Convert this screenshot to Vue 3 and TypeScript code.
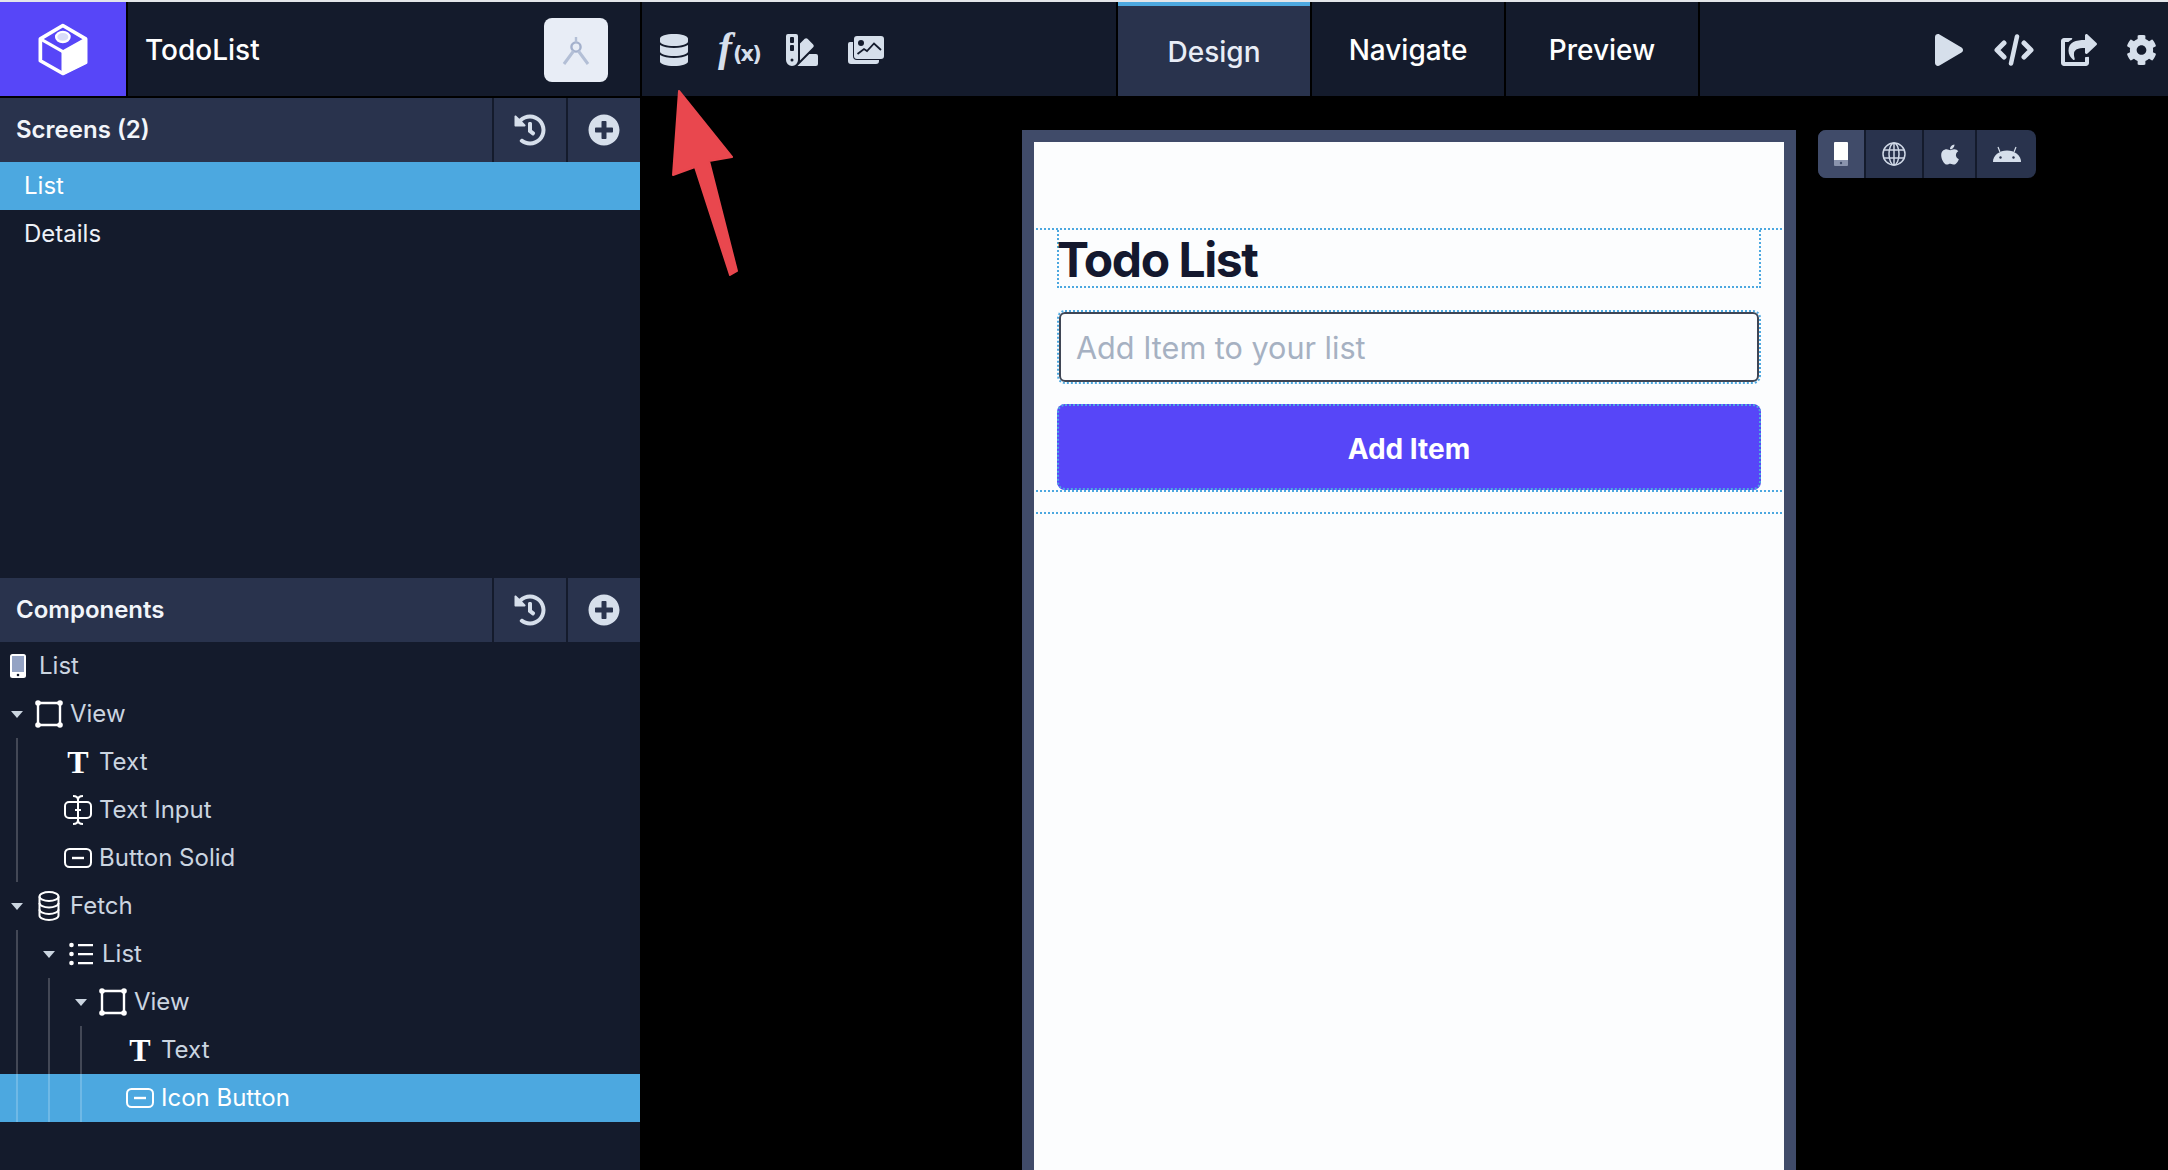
<script setup lang="ts">
interface TreeRow {
  label: string;
  icon: string;
  pad: number;
  open?: boolean;
  guides: number[];
  selected?: boolean;
}

const screens = [
  { name: "List", selected: true },
  { name: "Details", selected: false },
];

const tree: TreeRow[] = [
  { label: "List", icon: "phone", pad: 4, guides: [] },
  { label: "View", icon: "view", pad: 0, open: true, guides: [] },
  { label: "Text", icon: "text", pad: 64, guides: [16] },
  { label: "Text Input", icon: "input", pad: 64, guides: [16] },
  { label: "Button Solid", icon: "button", pad: 64, guides: [16] },
  { label: "Fetch", icon: "fetch", pad: 0, open: true, guides: [] },
  { label: "List", icon: "list", pad: 32, open: true, guides: [16] },
  { label: "View", icon: "view", pad: 64, open: true, guides: [16, 48] },
  { label: "Text", icon: "text", pad: 126, guides: [16, 48, 80] },
  { label: "Icon Button", icon: "button", pad: 126, guides: [16, 48, 80], selected: true },
];

const tabs = [
  { name: "Design", active: true },
  { name: "Navigate", active: false },
  { name: "Preview", active: false },
];

const historyPath =
  "M504 255.531c.253 136.64-111.18 248.372-247.82 248.468-59.015.042-113.223-20.53-155.822-54.911-11.077-8.94-11.905-25.541-1.839-35.607l11.267-11.267c8.609-8.609 22.353-9.551 31.891-1.984C173.062 425.135 212.781 440 256 440c101.705 0 184-82.311 184-184 0-101.705-82.311-184-184-184-48.814 0-93.149 18.969-126.068 49.932l50.754 50.754c10.08 10.08 2.941 27.314-11.313 27.314H24c-8.837 0-16-7.163-16-16V38.627c0-14.254 17.234-21.393 27.314-11.314l49.372 49.372C129.209 34.136 189.552 8 256 8c136.81 0 247.747 110.78 248 247.531zm-180.912 78.784l9.823-12.63c8.138-10.463 6.253-25.542-4.21-33.679L288 256.349V152c0-13.255-10.745-24-24-24h-16c-13.255 0-24 10.745-24 24v135.651l65.409 50.874c10.463 8.137 25.541 6.253 33.679-4.21z";
const plusPath =
  "M256 8C119 8 8 119 8 256s111 248 248 248 248-111 248-248S393 8 256 8zm144 276c0 6.6-5.4 12-12 12h-92v92c0 6.6-5.4 12-12 12h-56c-6.6 0-12-5.4-12-12v-92h-92c-6.6 0-12-5.4-12-12v-56c0-6.6 5.4-12 12-12h92v-92c0-6.6 5.4-12 12-12h56c6.6 0 12 5.4 12 12v92h92c6.6 0 12 5.4 12 12v56z";
</script>

<template>
  <div class="app">
    <div class="top-strip"></div>

    <header class="topbar">
      <div class="brand">
        <svg class="logo" viewBox="55 40 155 160">
          <path d="M132 50 200 90V160L132 193 65 155V90Z" fill="none" stroke="#fff" stroke-width="11" stroke-linejoin="round" />
          <path d="M132 128 200 90V160L132 193Z" fill="#fff" stroke="#fff" stroke-width="8" stroke-linejoin="round" />
          <path d="M65 90 132 128" stroke="#fff" stroke-width="9" />
          <ellipse cx="132" cy="84" rx="20" ry="15" fill="#d9dcf8" stroke="#fff" stroke-width="7" />
        </svg>
      </div>
      <div class="project">
        <span class="project-name">TodoList</span>
        <button class="draft-btn" type="button">
          <svg width="28" height="32" viewBox="0 0 28 32" fill="none" stroke="#b3bfd6" stroke-width="2.4">
            <circle cx="14" cy="13" r="4.6" stroke="#a3b0cc" />
            <path d="M14 3v5.5" />
            <path d="M11.6 17 2 30M16.4 17 26 30" stroke-width="3" />
          </svg>
        </button>
      </div>
      <div class="tools">
        <svg class="tool" width="28" height="32" viewBox="0 0 448 512" fill="currentColor">
          <path d="M448 73.143v45.714C448 159.143 347.667 192 224 192S0 159.143 0 118.857V73.143C0 32.857 100.333 0 224 0s224 32.857 224 73.143zM448 176v102.857C448 319.143 347.667 352 224 352S0 319.143 0 278.857V176c48.125 33.143 136.208 48.572 224 48.572S399.874 209.143 448 176zm0 160v102.857C448 479.143 347.667 512 224 512S0 479.143 0 438.857V336c48.125 33.143 136.208 48.572 224 48.572S399.874 369.143 448 336z" />
        </svg>
        <span class="fx">f<span class="fx-arg">(x)</span></span>
        <svg class="tool" width="32" height="32" viewBox="0 0 512 512" fill="currentColor">
          <path d="M434.66,167.71h0L344.5,77.36a31.83,31.83,0,0,0-45-.07h0l-.07.07L224,152.88V424L434.66,212.9A32,32,0,0,0,434.66,167.71ZM480,320H373.09L186.68,506.51c-2.06,2.07-4.5,3.58-6.68,5.49H480a32,32,0,0,0,32-32V352A32,32,0,0,0,480,320ZM192,32A32,32,0,0,0,160,0H32A32,32,0,0,0,0,32V416a96,96,0,0,0,192,0ZM96,440a24,24,0,1,1,24-24A24,24,0,0,1,96,440Zm32-184a16,16,0,0,1-16,16H80a16,16,0,0,1-16-16V192a16,16,0,0,1,16-16h32a16,16,0,0,1,16,16Zm0-128a16,16,0,0,1-16,16H80a16,16,0,0,1-16-16V64A16,16,0,0,1,80,48h32a16,16,0,0,1,16,16Z" />
        </svg>
        <svg class="tool" width="36" height="28" viewBox="0 0 36 28" fill="currentColor">
          <path d="M2 6h3v14a4 4 0 0 0 4 4h22v1a3 3 0 0 1-3 3H3a3 3 0 0 1-3-3V8a2 2 0 0 1 2-2Z" />
          <rect x="6" y="0" width="30" height="23" rx="3" />
          <circle cx="13" cy="7" r="3" fill="#141b2c" />
          <path d="M9.5 18 16 13l3 2 7-7.500 7 6.500" fill="none" stroke="#141b2c" stroke-width="1.800" />
        </svg>
      </div>
      <nav class="tabs">
        <div v-for="tab in tabs" :key="tab.name" class="tab" :class="{ active: tab.active }">{{ tab.name }}</div>
      </nav>
      <div class="actions">
        <svg class="tool" width="28" height="32" viewBox="0 0 448 512" fill="currentColor">
          <path d="M424.4 214.7L72.4 6.6C43.8-10.3 0 6.1 0 47.9V464c0 37.5 40.7 60.1 72.4 41.3l352-208c31.4-18.5 31.5-64.1 0-82.6z" />
        </svg>
        <svg class="tool code-icon" width="40" height="32" viewBox="0 0 40 32" fill="none" stroke="currentColor" stroke-width="5" stroke-linejoin="round" stroke-linecap="round">
          <path d="M10 9 3 16l7 7M30 9l7 7-7 7" />
          <path d="M23 2.500l-6 27" stroke-width="4.500" />
        </svg>
        <svg class="tool" width="36" height="32" viewBox="0 0 576 512" fill="currentColor">
          <path d="M568.482 177.448L424.479 313.433C409.3 327.768 384 317.14 384 295.985v-71.963c-144.575.97-205.566 35.113-164.775 171.353 4.483 14.973-12.846 26.567-25.006 17.33C155.252 383.105 120 326.488 120 269.339c0-143.937 117.599-172.5 264-173.312V24.012c0-21.174 25.317-31.768 40.479-17.448l144.003 135.988c10.02 9.463 10.028 25.425 0 34.896zM384 379.128V448H64V128h50.916a11.99 11.99 0 0 0 8.648-3.693c14.953-15.568 32.237-27.89 51.014-37.676C186.708 80.83 180.584 64 167.202 64H48C21.49 64 0 85.49 0 112v352c0 26.51 21.49 48 48 48h352c26.51 0 48-21.49 48-48v-88.806c0-8.288-8.197-14.066-16.011-11.302a71.83 71.83 0 0 1-34.189 3.377c-7.27-1.046-13.8 4.514-13.8 11.859z" />
        </svg>
        <svg class="tool" width="31" height="32" viewBox="0 0 512 512" fill="currentColor">
          <path d="M487.4 315.7l-42.6-24.6c4.3-23.2 4.3-47 0-70.2l42.6-24.6c4.9-2.8 7.1-8.6 5.500-14-11.100-35.600-30-67.800-54.700-94.600-3.800-4.100-10-5.100-14.800-2.300L380.800 110c-17.900-15.400-38.500-27.300-60.800-35.100V25.800c0-5.600-3.900-10.500-9.400-11.700-36.700-8.200-74.300-7.800-109.200 0-5.500 1.200-9.400 6.100-9.400 11.700V75c-22.200 7.900-42.800 19.800-60.800 35.100L88.700 85.500c-4.900-2.800-11-1.900-14.800 2.300-24.700 26.700-43.600 58.900-54.700 94.600-1.700 5.400.6 11.200 5.500 14L67.300 221c-4.300 23.200-4.300 47 0 70.200l-42.600 24.600c-4.900 2.800-7.100 8.600-5.500 14 11.100 35.600 30 67.800 54.700 94.600 3.800 4.100 10 5.100 14.800 2.300l42.600-24.600c17.900 15.400 38.500 27.300 60.800 35.100v49.200c0 5.600 3.900 10.500 9.400 11.700 36.700 8.200 74.300 7.800 109.200 0 5.500-1.200 9.400-6.100 9.400-11.700v-49.200c22.200-7.900 42.800-19.800 60.800-35.100l42.600 24.600c4.900 2.800 11 1.900 14.800-2.300 24.700-26.700 43.600-58.900 54.700-94.600 1.500-5.500-.7-11.300-5.600-14.100zM256 336c-44.100 0-80-35.900-80-80s35.900-80 80-80 80 35.900 80 80-35.900 80-80 80z" />
        </svg>
      </div>
    </header>

    <div class="workspace">
      <aside class="sidebar">
        <section class="screens">
          <div class="panel-head">
            <span class="panel-title">Screens (2)</span>
            <button class="head-btn" type="button">
              <svg width="32" height="32" viewBox="0 0 512 512" fill="currentColor"><path :d="historyPath" /></svg>
            </button>
            <button class="head-btn" type="button">
              <svg width="32" height="32" viewBox="0 0 512 512" fill="currentColor"><path :d="plusPath" /></svg>
            </button>
          </div>
          <div v-for="s in screens" :key="s.name" class="screen-row" :class="{ selected: s.selected }">{{ s.name }}</div>
        </section>

        <section class="components">
          <div class="panel-head">
            <span class="panel-title">Components</span>
            <button class="head-btn" type="button">
              <svg width="32" height="32" viewBox="0 0 512 512" fill="currentColor"><path :d="historyPath" /></svg>
            </button>
            <button class="head-btn" type="button">
              <svg width="32" height="32" viewBox="0 0 512 512" fill="currentColor"><path :d="plusPath" /></svg>
            </button>
          </div>
          <div
            v-for="(row, i) in tree"
            :key="i"
            class="tree-row"
            :class="{ selected: row.selected }"
            :style="{ paddingLeft: row.pad + 'px' }"
          >
            <i v-for="g in row.guides" :key="g" class="guide" :style="{ left: g + 'px' }"></i>
            <span v-if="row.open" class="caret-slot"><b class="caret"></b></span>
            <span class="node-icon">
              <svg v-if="row.icon === 'phone'" width="16" height="24" viewBox="0 0 16 24">
                <rect x="0" y="0" width="16" height="24" rx="2.500" fill="#fff" />
                <rect x="2" y="2" width="12" height="16" fill="#94a3c4" />
                <circle cx="8" cy="21" r="1.300" fill="#141b2c" />
              </svg>
              <svg v-else-if="row.icon === 'view'" width="28" height="28" viewBox="0 0 28 28" fill="#fff">
                <path d="M3 3h22v22H3Z" fill="none" stroke="#fff" stroke-width="2.400" />
                <circle cx="3" cy="3" r="2.800" /><circle cx="25" cy="3" r="2.800" />
                <circle cx="3" cy="25" r="2.800" /><circle cx="25" cy="25" r="2.800" />
              </svg>
              <span v-else-if="row.icon === 'text'" class="glyph-t">T</span>
              <svg v-else-if="row.icon === 'input'" width="28" height="30" viewBox="0 0 28 30" fill="none" stroke="#fff" stroke-width="2">
                <rect x="1" y="7" width="26" height="16" rx="4" />
                <path d="M9 1c3 0 5 1 5 4v20c0 3-2 4-5 4M19 1c-3 0-5 1-5 4v20c0 3 2 4 5 4" />
                <path d="M11 15h6" />
              </svg>
              <svg v-else-if="row.icon === 'button'" width="28" height="20" viewBox="0 0 28 20" fill="none" stroke="#fff" stroke-width="2">
                <rect x="1" y="1" width="26" height="18" rx="4.500" />
                <path d="M8 10h12" stroke-width="2.400" />
              </svg>
              <svg v-else-if="row.icon === 'fetch'" width="22" height="30" viewBox="0 0 22 30" fill="none" stroke="#fff" stroke-width="2">
                <ellipse cx="11" cy="5.500" rx="9.500" ry="4.500" />
                <path d="M1.500 5.500v19c0 2.500 4.300 4.500 9.500 4.500s9.500-2 9.500-4.500v-19" />
                <path d="M1.500 12c0 2.500 4.300 4.500 9.500 4.500s9.500-2 9.500-4.500M1.500 18.500c0 2.500 4.300 4.500 9.500 4.500s9.500-2 9.500-4.500" />
              </svg>
              <svg v-else width="24" height="24" viewBox="0 0 24 24" fill="#fff">
                <circle cx="2.500" cy="3" r="2.300" /><circle cx="2.500" cy="12" r="2.300" /><circle cx="2.500" cy="21" r="2.300" />
                <path d="M9 2h15v2.200H9zM9 11h15v2.200H9zM9 20h15v2.200H9z" />
              </svg>
            </span>
            <span class="node-label">{{ row.label }}</span>
          </div>
        </section>
      </aside>

      <main class="canvas">
        <div class="phone">
          <div class="phone-screen">
            <div class="view-box">
              <div class="title-box">Todo List</div>
              <input class="item-input" type="text" placeholder="Add Item to your list" readonly />
              <div class="add-btn">Add Item</div>
            </div>
            <div class="fetch-line"></div>
          </div>
        </div>

        <div class="devices">
          <div class="device active">
            <svg width="14" height="24" viewBox="0 0 14 24">
              <path d="M1 0h12a1 1 0 0 1 1 1v17H0V1a1 1 0 0 1 1-1Z" fill="#fff" />
              <path d="M0 18h14v5a1 1 0 0 1-1 1H1a1 1 0 0 1-1-1Z" fill="#8a94ad" />
              <circle cx="7" cy="21" r="1.200" fill="#404b69" />
            </svg>
          </div>
          <div class="device w-web">
            <svg width="24" height="24" viewBox="0 0 24 24" fill="none" stroke="#cfd8e6" stroke-width="1.500">
              <circle cx="12" cy="12" r="11" />
              <ellipse cx="12" cy="12" rx="5" ry="11" />
              <path d="M12 1v22M1.800 8h20.400M1.800 16h20.400" />
            </svg>
          </div>
          <div class="device w-ios">
            <svg width="18" height="23" viewBox="0 0 384 512" fill="#d6dfeb" preserveAspectRatio="none">
              <path d="M318.700 268.700c-.2-36.700 16.400-64.400 50-84.800-18.800-26.900-47.200-41.700-84.700-44.600-35.500-2.800-74.300 20.700-88.500 20.700-15 0-49.400-19.700-76.400-19.700C63.300 141.200 4 184.800 4 273.500q0 39.300 14.400 81.200c12.800 36.700 59 126.700 107.200 125.200 25.200-.6 43-17.900 75.800-17.900 31.800 0 48.300 17.900 76.400 17.900 48.600-.7 90.400-82.500 102.600-119.300-65.200-30.700-61.700-90-61.700-91.900zm-56.600-164.200c27.300-32.400 24.800-61.900 24-72.500-24.100 1.400-52 16.400-67.900 34.900-17.500 19.800-27.800 44.300-25.600 71.900 26.100 2 49.900-11.400 69.500-34.300z" />
            </svg>
          </div>
          <div class="device w-android">
            <svg width="28" height="16" viewBox="0 0 28 16">
              <path d="M0 16a14 11.500 0 0 1 28 0Z" fill="#d6dfeb" />
              <path d="M7 6 5 1M21 6l2-5" stroke="#d6dfeb" stroke-width="1.200" />
              <circle cx="7.500" cy="11.500" r="1.200" fill="#29334d" />
              <circle cx="20.500" cy="11.500" r="1.200" fill="#29334d" />
            </svg>
          </div>
        </div>
      </main>
    </div>

    <svg class="arrow" width="68" height="188" viewBox="0 0 68 188">
      <path
        d="M7 1 60 67 37 71 65 181 58 185 23 77 1 85Z"
        fill="#e9474e"
        stroke="#e9474e"
        stroke-width="2"
        stroke-linejoin="round"
      />
    </svg>
  </div>
</template>

<style>
body {
  background: #000;
}
</style>

<style scoped>
.app {
  position: relative;
  width: 2168px;
  height: 1170px;
  overflow: hidden;
  display: flex;
  flex-direction: column;
  background: #000;
  font-family: Inter, "Liberation Sans", sans-serif;
  color: #fff;
}

.top-strip {
  height: 2px;
  background: #e4e6ea;
  flex-shrink: 0;
}

.topbar {
  height: 94px;
  flex-shrink: 0;
  display: flex;
  background: #141b2c;
}

.brand {
  width: 126px;
  background: #5746f8;
  border-right: 2px solid #000;
  display: flex;
  align-items: center;
  justify-content: center;
  flex-shrink: 0;
  box-sizing: content-box;
}

.logo {
  width: 52px;
  height: 54px;
}

.project {
  width: 463px;
  border-right: 2px solid #000;
  display: flex;
  align-items: center;
  justify-content: space-between;
  padding: 2px 32px 0 17px;
  box-sizing: content-box;
}

.project-name {
  font-size: 28px;
  font-weight: 500;
}

.draft-btn {
  width: 64px;
  height: 64px;
  border: none;
  border-radius: 8px;
  background: #e8edf6;
  display: flex;
  align-items: center;
  justify-content: center;
  padding: 0;
}

.tools {
  width: 476px;
  padding: 2px 0 0 18px;
  display: flex;
  align-items: center;
  gap: 30px;
  color: #d6dfeb;
  box-sizing: border-box;
  border-right: 2px solid #000;
}

.tool {
  flex-shrink: 0;
}

.fx {
  width: 40px;
  margin-right: -2px;
  font-family: "Liberation Serif", serif;
  font-style: italic;
  font-weight: 700;
  font-size: 42px;
  line-height: 32px;
  white-space: nowrap;
  color: #d6dfeb;
}

.fx-arg {
  font-family: "DejaVu Sans", sans-serif;
  font-style: normal;
  font-size: 21px;
  letter-spacing: -2px;
  margin-left: 1px;
}

.tabs {
  display: flex;
}

.tab {
  width: 194px;
  border-right: 2px solid #000;
  display: flex;
  align-items: center;
  justify-content: center;
  padding-top: 2px;
  font-size: 28px;
  font-weight: 500;
  box-sizing: border-box;
}

.tab.active {
  background: #29334d;
  box-shadow: inset 0 4px 0 #4ca8e0;
  padding-top: 6px;
  color: #e8edf6;
}

.actions {
  flex: 1;
  display: flex;
  align-items: center;
  justify-content: flex-end;
  gap: 29px;
  padding: 2px 11px 0 0;
  color: #d6dfeb;
}

.code-icon {
  position: relative;
  left: 2px;
}

.workspace {
  flex: 1;
  display: flex;
  margin-top: 2px;
  min-height: 0;
}

.sidebar {
  width: 640px;
  flex-shrink: 0;
  background: #141b2c;
  display: flex;
  flex-direction: column;
}

.screens {
  height: 480px;
  flex-shrink: 0;
}

.panel-head {
  height: 64px;
  display: flex;
  align-items: center;
  background: #29334d;
}

.panel-title {
  flex: 1;
  padding: 0 0 1px 16px;
  font-size: 24px;
  font-weight: 600;
  color: #f2f5fa;
}

.head-btn {
  width: 72px;
  height: 64px;
  border: none;
  border-left: 2px solid #141b2c;
  box-sizing: content-box;
  background: transparent;
  color: #d6dfeb;
  display: flex;
  align-items: center;
  justify-content: center;
  padding: 0;
}

.screen-row {
  height: 48px;
  display: flex;
  align-items: center;
  padding: 0 0 1px 24px;
  box-sizing: border-box;
  font-size: 24px;
  color: #edf1f7;
}

.screen-row.selected,
.tree-row.selected {
  background: #4ca8e0;
  color: #fff;
}

.tree-row {
  position: relative;
  height: 48px;
  display: flex;
  align-items: center;
  font-size: 24px;
  color: #cbd5e0;
}

.tree-row.selected .node-label {
  color: #fff;
}

.node-label {
  margin-top: -1px;
}

.guide {
  position: absolute;
  top: 0;
  bottom: 0;
  width: 2px;
  background: rgba(255, 255, 255, 0.2);
}

.caret-slot {
  width: 34px;
  margin-right: 1px;
  display: flex;
  justify-content: center;
}

.caret {
  width: 0;
  height: 0;
  border-left: 6px solid transparent;
  border-right: 6px solid transparent;
  border-top: 7px solid #cbd5e0;
}

.node-icon {
  width: 28px;
  height: 32px;
  margin-right: 7px;
  display: flex;
  align-items: center;
  justify-content: center;
  flex-shrink: 0;
}

.glyph-t {
  font-family: "Liberation Serif", serif;
  font-size: 32px;
  font-weight: 700;
  line-height: 32px;
  color: #fff;
}

.canvas {
  flex: 1;
  display: flex;
  align-items: flex-start;
  gap: 22px;
  padding: 32px 0 0 382px;
  min-width: 0;
}

.phone {
  width: 750px;
  height: 1040px;
  flex-shrink: 0;
  border: 12px solid #404b69;
  border-bottom: none;
  background: #fcfdfe;
}

.phone-screen {
  padding-top: 86px;
}

.view-box {
  border-top: 2px dotted #4ca8e0;
  border-bottom: 2px dotted #4ca8e0;
  padding: 0 21px;
  margin: 0 2px;
}

.title-box {
  height: 58px;
  padding-top: 2px;
  display: flex;
  align-items: center;
  border: 2px dotted #4ca8e0;
  border-top: none;
  font-size: 48px;
  font-weight: 700;
  color: #14182e;
  letter-spacing: -1.45px;
  box-sizing: border-box;
  text-indent: -2px;
}

.item-input {
  display: block;
  width: calc(100% - 4px);
  height: 70px;
  margin: 24px 2px 1px;
  padding: 0 15px;
  box-sizing: border-box;
  border: 2px solid #3f4655;
  border-radius: 6px;
  outline: 2px dotted #4ca8e0;
  outline-offset: 0;
  background: transparent;
  font-family: Inter, "Liberation Sans", sans-serif;
  font-size: 30.6px;
}

.item-input::placeholder {
  color: #a6b1c2;
}

.add-btn {
  height: 86px;
  margin-top: 22px;
  padding-top: 3px;
  box-sizing: border-box;
  border-radius: 8px;
  outline: 2px dotted #4ca8e0;
  outline-offset: -2px;
  background: #5746f8;
  display: flex;
  align-items: center;
  justify-content: center;
  font-size: 28px;
  font-weight: 700;
  color: #fff;
}

.fetch-line {
  margin: 20px 2px 0;
  border-top: 2px dotted #4ca8e0;
}

.devices {
  display: flex;
  height: 48px;
  border-radius: 8px;
  overflow: hidden;
  background: #29334d;
}

.device {
  width: 46px;
  display: flex;
  align-items: center;
  justify-content: center;
  border-right: 2px solid #141b2c;
  box-sizing: content-box;
}

.device.active {
  background: #404b69;
}

.device.w-web {
  width: 56px;
}

.device.w-ios {
  width: 51px;
}

.device.w-android {
  width: 59px;
  border-right: none;
}

.arrow {
  position: absolute;
  left: 672px;
  top: 90px;
}
</style>
